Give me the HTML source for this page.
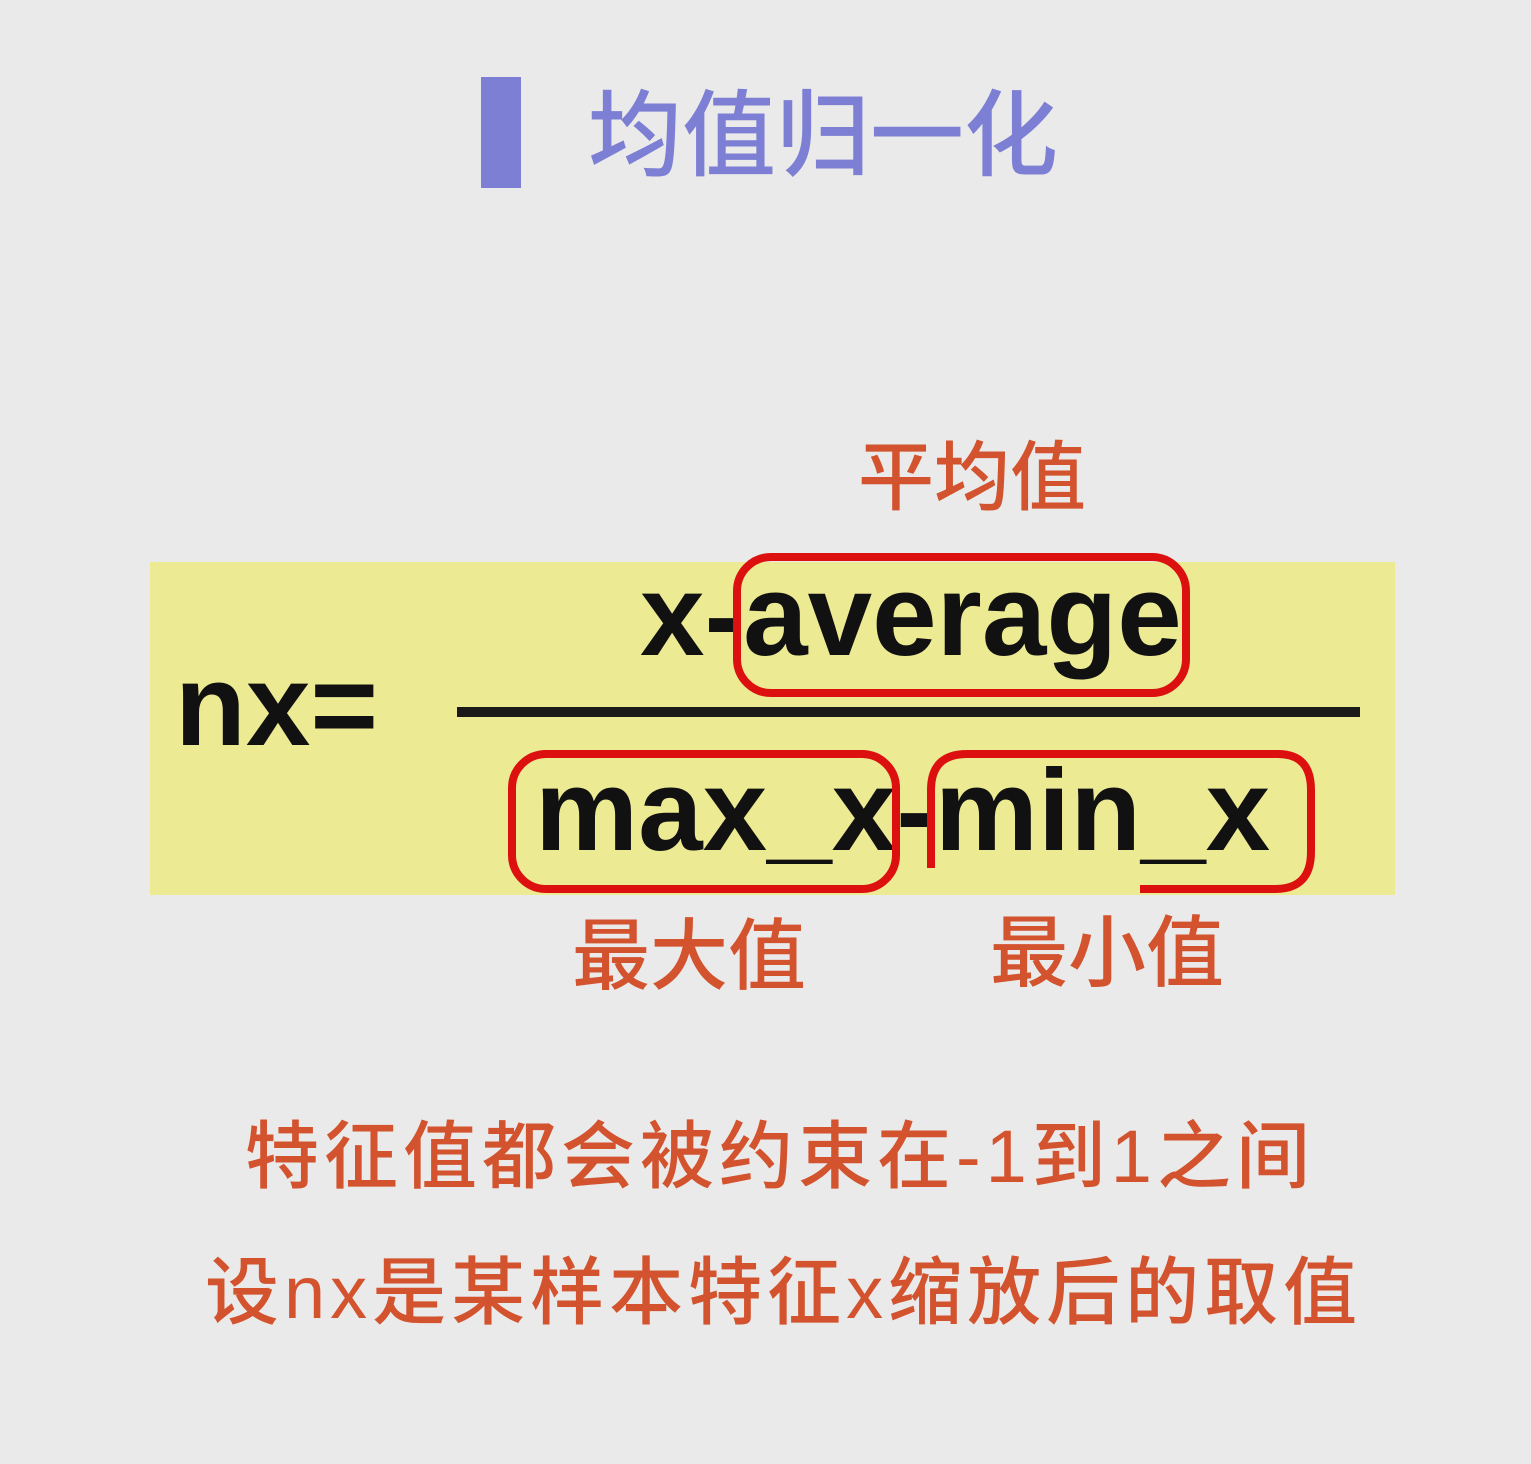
<!DOCTYPE html>
<html><head><meta charset="utf-8"><style>
html,body{margin:0;padding:0}
body{width:1531px;height:1464px;background:#ebeaea;position:relative;overflow:hidden}
.a{position:absolute;white-space:nowrap;line-height:1}
.cjk{font-family:"Liberation Sans","Noto Sans CJK SC",sans-serif;font-weight:500}
.f{font-family:"Liberation Sans",sans-serif;font-weight:bold;font-size:116px;color:#111}
.r{color:#d2532e}
</style></head><body>
<div class="a" style="left:481px;top:77px;width:40px;height:111px;background:#7c7fd4"></div>
<div class="a cjk" style="left:588px;top:89px;font-size:94px;color:#7c7fd4;">均值归一化</div>

<div class="a cjk r" style="left:858px;top:441px;font-size:76px;">平均值</div>

<div class="a" style="left:150px;top:562px;width:1245px;height:333px;background:#ecea93"></div>
<div class="a" style="left:457px;top:707px;width:903px;height:10px;background:#1a1a1a"></div>
<div class="a f" style="left:175px;top:647px;">nx=</div>
<div class="a f" style="left:640px;top:557px;">x-average</div>
<div class="a f" style="left:535px;top:752px;">max_x-min_x</div>

<svg class="a" style="left:0;top:0" width="1531" height="1464">
<g fill="none" stroke="#dd1010" stroke-width="8">
<rect x="737" y="557" width="449" height="136" rx="34"/>
<rect x="512" y="754" width="384" height="135" rx="34"/>
<path d="M931 868 V790 Q931 754 967 754 H1278 Q1311 754 1311 790 V852 Q1311 889 1275 889 H1140"/>
</g>
</svg>

<div class="a cjk r" style="left:572px;top:917px;font-size:78px;">最大值</div>
<div class="a cjk r" style="left:990px;top:914px;font-size:78px;">最小值</div>

<div class="a cjk r" style="left:245px;top:1120px;font-size:74px;letter-spacing:5px;">特征值都会被约束在-1到1之间</div>
<div class="a cjk r" style="left:205px;top:1256px;font-size:74px;letter-spacing:5px;">设nx是某样本特征x缩放后的取值</div>
</body></html>
